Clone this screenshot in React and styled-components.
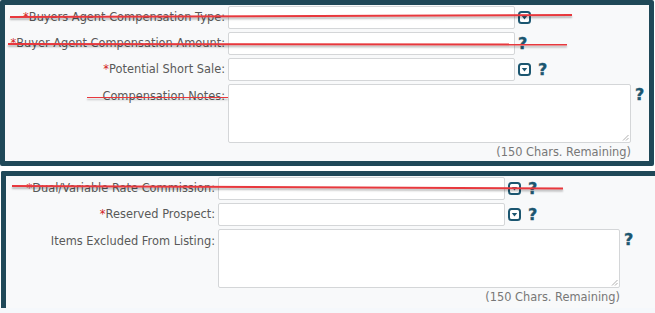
import React from "react"
import styled, { createGlobalStyle } from "styled-components"

const GlobalStyle = createGlobalStyle`
  html, body {
    margin: 0;
    padding: 0;
    background: #ffffff;
    overflow: hidden;
  }
  body {
    font-family: "DejaVu Sans", Verdana, sans-serif;
    font-size: 11.4px;
  }
`

const teal = "#1f4858"
const iconBlue = "#1b5670"

const Page = styled.div`
  position: relative;
  width: 655px;
  height: 313px;
  overflow: hidden;
  background: linear-gradient(to bottom, #fff 0, #fff 308px, #f5f8fb 308px);
`

const Panel = styled.section`
  background: #f8f9fa;
  border: 5px solid ${teal};
  border-bottom-width: ${(p) => (p.$open ? 0 : 5)}px;
  border-radius: ${(p) => (p.$open ? "2px 2px 0 0" : "2px")};
  padding: 1px 0 2px 0;
  width: ${(p) => p.$width}px;
  box-sizing: border-box;
  margin-left: ${(p) => p.$left || 0}px;
  margin-top: ${(p) => p.$top || 0}px;
  height: ${(p) => (p.$height ? `${p.$height}px` : "auto")};
`

const Row = styled.div`
  display: flex;
  align-items: ${(p) => (p.$top ? "flex-start" : "center")};
  margin-bottom: ${(p) => (p.$top ? 0 : 3)}px;
`

const Label = styled.label`
  width: ${(p) => p.$width}px;
  flex: none;
  text-align: right;
  color: #595959;
  padding-right: 3px;
  box-sizing: border-box;
  white-space: nowrap;
  padding-top: ${(p) => (p.$top ? "6px" : "0")};
  line-height: 13px;
`

const Req = styled.span`
  color: #d32222;
`

const Input = styled.div`
  width: 287px;
  height: 23px;
  box-sizing: border-box;
  background: #fff;
  border: 1px solid #d4d6d8;
  border-radius: 2px;
  flex: none;
`

const TextArea = styled.div`
  position: relative;
  width: ${(p) => p.$width}px;
  height: 59px;
  box-sizing: border-box;
  background: #fff;
  border: 1px solid #d4d6d8;
  border-radius: 2px;
  flex: none;
`

const Grip = styled.svg`
  position: absolute;
  right: 1px;
  bottom: 1px;
`

const Icons = styled.div`
  display: flex;
  align-items: center;
  gap: 7px;
  margin-left: ${(p) => p.$gap || 3}px;
  padding-top: ${(p) => (p.$top ? "3px" : "0")};
`

const Help = styled.span`
  font-weight: bold;
  font-size: 16px;
  line-height: 15px;
  color: ${iconBlue};
  -webkit-text-stroke: 0.4px ${iconBlue};
`

const Remaining = styled.div`
  width: ${(p) => p.$right}px;
  text-align: right;
  color: #777;
  line-height: 14px;
  margin-top: 2px;
`

const Strike = styled.div`
  position: absolute;
  height: 1.5px;
  background: #e8383d;
  box-shadow: 0 2px 2px rgba(0, 0, 0, 0.28);
  transform-origin: left center;
  z-index: 5;
`

const Dropdown = () => (
  <svg width="13" height="13" viewBox="0 0 13 13">
    <rect x="1" y="1" width="11" height="11" rx="2.5" fill="#fff" stroke={iconBlue} strokeWidth="2" />
    <path d="M3.8 5 L9.2 5 L6.5 8.4 Z" fill={iconBlue} />
  </svg>
)

const ResizeGrip = () => (
  <Grip width="7" height="7" viewBox="0 0 7 7">
    <path d="M1 6.5 L6.5 1 M4 6.5 L6.5 4" stroke="#999" strokeWidth="0.8" />
  </Grip>
)

const Field = ({ label, required, width, select, help = true }) => (
  <Row>
    <Label $width={width}>
      {required && <Req>*</Req>}
      {label}
    </Label>
    <Input />
    <Icons>
      {select && <Dropdown />}
      {help && <Help>?</Help>}
    </Icons>
  </Row>
)

const Notes = ({ label, width, areaWidth }) => (
  <>
    <Row $top>
      <Label $width={width} $top>
        {label}
      </Label>
      <TextArea $width={areaWidth}>
        <ResizeGrip />
      </TextArea>
      <Icons $gap={4} $top>
        <Help>?</Help>
      </Icons>
    </Row>
    <Remaining $right={width + areaWidth}>(150 Chars. Remaining)</Remaining>
  </>
)

const strikes = [
  { left: 10, top: 16, width: 562, angle: -0.2 },
  { left: 8, top: 42.5, width: 559, angle: 0.05 },
  { left: 87, top: 96.5, width: 141, angle: 0 },
  { left: 12, top: 184.5, width: 551, angle: 0.25 },
]

export default function App() {
  return (
    <Page>
      <GlobalStyle />
      <Panel $width={654}>
        <Field label="Buyers Agent Compensation Type:" required width={223} select help={false} />
        <Field label="Buyer Agent Compensation Amount:" required width={223} />
        <Field label="Potential Short Sale:" required width={223} select />
        <Notes label="Compensation Notes:" width={223} areaWidth={403} />
      </Panel>
      <Panel $width={720} $left={1} $top={5} $height={137} $open>
        <Field label="Dual/Variable Rate Commission:" required width={212} select />
        <Field label="Reserved Prospect:" required width={212} select />
        <Notes label="Items Excluded From Listing:" width={212} areaWidth={402} />
      </Panel>
      {strikes.map((s, i) => (
        <Strike
          key={i}
          style={{
            left: s.left,
            top: s.top,
            width: s.width,
            transform: `rotate(${s.angle}deg)`,
          }}
        />
      ))}
    </Page>
  )
}
